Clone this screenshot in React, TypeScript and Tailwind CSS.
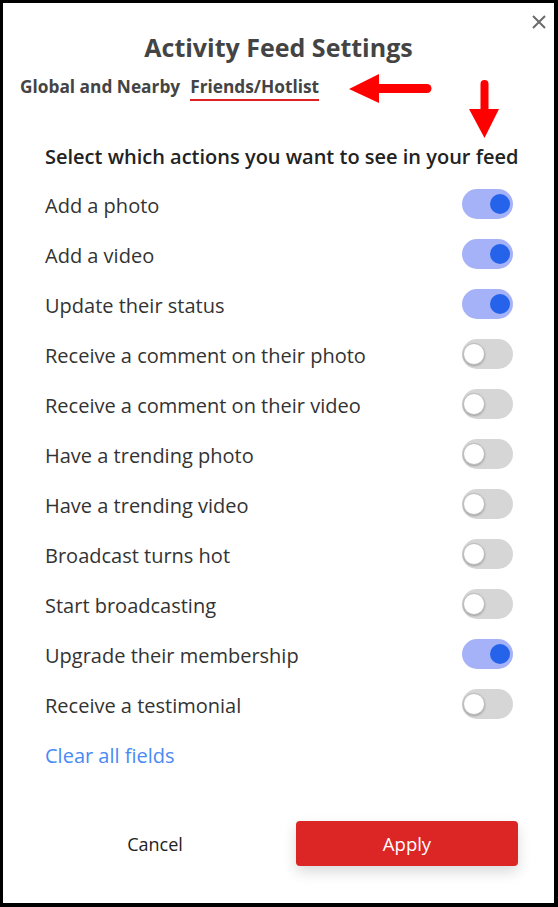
import React from "react";

const items: [string, boolean][] = [
  ["Add a photo", true],
  ["Add a video", true],
  ["Update their status", true],
  ["Receive a comment on their photo", false],
  ["Receive a comment on their video", false],
  ["Have a trending photo", false],
  ["Have a trending video", false],
  ["Broadcast turns hot", false],
  ["Start broadcasting", false],
  ["Upgrade their membership", true],
  ["Receive a testimonial", false],
];

function Toggle({ on }: { on: boolean }) {
  return on ? (
    <div className="w-[51px] h-[30px] rounded-full bg-[#a6b2f7] flex items-center justify-end pr-[3px]">
      <div className="w-[20px] h-[20px] rounded-full bg-[#2563eb]" />
    </div>
  ) : (
    <div className="w-[51px] h-[30px] rounded-full bg-[#d6d6d6] flex items-center justify-start pl-[1px]">
      <div className="w-[22px] h-[22px] rounded-full bg-white border border-[#bdbdbd] shadow-[0_1px_2px_rgba(0,0,0,0.25)]" />
    </div>
  );
}

export default function App() {
  return (
    <div
      className="relative w-[558px] h-[907px] bg-white border-t-[3px] border-l-[3px] border-r-[4px] border-b-[4px] border-black flex flex-col"
      style={{ fontFamily: '"Open Sans", sans-serif' }}
    >
      <button className="absolute top-[7px] right-[3px] w-[24px] h-[24px] flex items-center justify-center">
        <svg width="16" height="16" viewBox="0 0 16 16">
          <path d="M2 2 L14 14 M14 2 L2 14" stroke="#6b6b6b" strokeWidth="2" strokeLinecap="butt" />
        </svg>
      </button>

      <svg className="absolute left-[343px] top-[66px]" width="160" height="75" viewBox="346 69 160 75">
        <polygon points="349,89 379,74 379,103" fill="#ff0000" />
        <line x1="377" y1="88.5" x2="427" y2="88.5" stroke="#ff0000" strokeWidth="9" strokeLinecap="round" />
        <line x1="484.5" y1="84" x2="484.5" y2="112" stroke="#ff0000" strokeWidth="8" strokeLinecap="round" />
        <polygon points="469,109 499,109 484.5,138" fill="#ff0000" />
      </svg>

      <h1 className="mt-[28px] text-center text-[25px] leading-[32px] font-bold text-[#444444]">
        Activity Feed Settings
      </h1>

      <div className="mt-[12px] pl-[17px] flex gap-[10px] text-[17.3px] leading-[24px] font-bold text-[#444444]">
        <span>Global and Nearby</span>
        <span className="border-b-2 border-[#e02020]">Friends/Hotlist</span>
      </div>

      <div className="pr-[41px] pl-[42px] mt-[44px] flex flex-col">
        <div className="whitespace-nowrap text-[20px] leading-[24px] font-semibold text-[#222222]">
          Select which actions you want to see in your feed
        </div>
        <div className="mt-[10px] flex flex-col">
          {items.map(([label, on]) => (
            <div key={label} className="h-[50px] flex items-center justify-between">
              <span className="text-[20px] leading-[28px] pt-[3px] text-[#333333]">{label}</span>
              <Toggle on={on} />
            </div>
          ))}
          <div className="h-[50px] flex items-center">
            <span className="text-[20px] leading-[28px] pt-[3px] text-[#4a8af4]">Clear all fields</span>
          </div>
        </div>
        <div className="mt-[42px] mr-[-5px] flex items-center">
          <div className="shrink-0 w-[220px] flex justify-center text-[18px] text-[#222222] pt-[2px]">Cancel</div>
          <button className="shrink-0 ml-[31px] w-[222px] h-[45px] rounded-[4px] bg-[#dc2626] text-white text-[18.5px] shadow-[0_6px_14px_rgba(0,0,0,0.15)]">
            Apply
          </button>
        </div>
      </div>
    </div>
  );
}
